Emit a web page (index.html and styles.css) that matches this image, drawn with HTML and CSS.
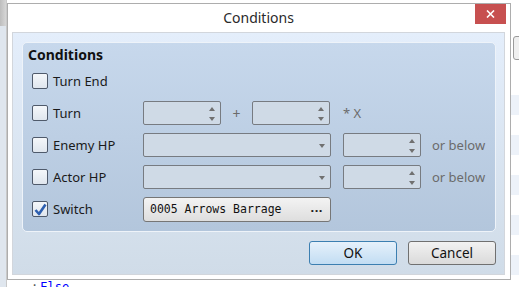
FILE: index.html
```html
<!DOCTYPE html>
<html lang="en">
<head>
    <meta charset="UTF-8">
    <title>Conditions</title>
    <link rel="stylesheet" href="styles.css">
</head>
<body>
    <div class="backdrop">
        <div class="scroll-strip"><div class="thumb"></div></div>
        <div class="event-list">
            <div class="list-rows">
                <div class="list-tool"></div>
            </div>
            <div class="list-line"><span class="dot">:</span><span class="kw">Else</span></div>
        </div>
    </div>

    <div class="dialog">
        <div class="titlebar">
            <span class="title">Conditions</span>
            <div class="close-btn">
                <svg width="9" height="8" viewBox="0 0 9 8"><path d="M1 0.5 L8 7.5 M8 0.5 L1 7.5" stroke="#fff" stroke-width="1.6" fill="none"/></svg>
            </div>
        </div>

        <div class="client">
            <div class="group">
                <div class="group-title">Conditions</div>

                <div class="row">
                    <div class="label-cell"><span class="check"></span>Turn End</div>
                </div>

                <div class="row">
                    <div class="label-cell"><span class="check"></span>Turn</div>
                    <div class="spin"><span class="arrows"></span></div>
                    <span class="plus">+</span>
                    <div class="spin"><span class="arrows"></span></div>
                    <span class="muted times">* X</span>
                </div>

                <div class="row">
                    <div class="label-cell"><span class="check"></span>Enemy HP</div>
                    <div class="combo"><span class="drop"></span></div>
                    <div class="spin"><span class="arrows"></span></div>
                    <span class="muted below">or below</span>
                </div>

                <div class="row">
                    <div class="label-cell"><span class="check"></span>Actor HP</div>
                    <div class="combo"><span class="drop"></span></div>
                    <div class="spin"><span class="arrows"></span></div>
                    <span class="muted below">or below</span>
                </div>

                <div class="row">
                    <div class="label-cell">
                        <span class="check checked">
                            <svg width="13" height="13" viewBox="0 0 13 13"><path d="M1.5 7 L5 11 L11.5 1.5" stroke="#2d5fb0" stroke-width="2.6" fill="none" stroke-linejoin="round"/></svg>
                        </span>Switch
                    </div>
                    <div class="picker"><span class="picker-value">0005 Arrows Barrage</span><span class="ellipsis">...</span></div>
                </div>
            </div>

            <div class="actions">
                <div class="btn btn-default">OK</div>
                <div class="btn">Cancel</div>
            </div>
        </div>
    </div>
</body>
</html>
```

FILE: styles.css
```css
* {
    box-sizing: border-box;
}
body {
    margin: 0;
    width: 519px;
    height: 287px;
    overflow: hidden;
    position: relative;
    background: #fff;
    font-family: "Noto Sans", sans-serif;
    font-size: 13px;
    color: #1a1a1a;
}

/* app behind the dialog */
.backdrop {
    display: flex;
    height: 100%;
}
.scroll-strip {
    width: 7px;
    background: #dfe6ee;
    border-right: 1px solid #c9c9c9;
}
.scroll-strip .thumb {
    height: 26px;
    background: linear-gradient(to right, #bdbdbd, #d6d6d6);
}
.event-list {
    flex: 1;
    display: flex;
    flex-direction: column;
}
.list-rows {
    flex: 1;
    position: relative;
    background-color: #fff;
    background-image: repeating-linear-gradient(to bottom, #edf2f9 0, #edf2f9 20px, #fff 20px, #fff 40px);
    background-position: 0 95px;
    background-repeat: no-repeat;
    background-size: 100% 200px;
}
.list-tool {
    position: absolute;
    right: -4px;
    top: 36px;
    width: 10px;
    height: 24px;
    border: 1px solid #9a9a9a;
    border-radius: 3px;
    background: #efefef;
}
.list-line {
    height: 7px;
    padding-left: 24px;
    font-family: "DejaVu Sans Mono", monospace;
    font-size: 12px;
    line-height: 14px;
}
.list-line .dot {
    color: #555;
    margin-right: 2px;
}
.list-line .kw {
    color: #0000ff;
}

/* dialog window */
.dialog {
    position: absolute;
    left: 7px;
    top: 3px;
    width: 504px;
    height: 277px;
    background: #fff;
    border: 1px solid #adadad;
    padding: 0 5px 4px 4px;
    display: flex;
    flex-direction: column;
}
.titlebar {
    height: 28px;
    line-height: 28px;
    text-align: center;
    font-size: 14px;
    color: #2a2a2a;
    position: relative;
}
.close-btn {
    position: absolute;
    right: -1px;
    top: 0;
    width: 31px;
    height: 20px;
    background: #c75050;
    display: flex;
    align-items: center;
    justify-content: center;
}
.client {
    flex: 1;
    border: 1px solid #d2d6dc;
    background: linear-gradient(to bottom, #e4eefb, #d0dce8);
    padding: 9px 8px 9px 9px;
    display: flex;
    flex-direction: column;
}

/* group box */
.group {
    height: 190px;
    border: 1px solid #eef3f9;
    border-radius: 5px;
    background: linear-gradient(to bottom, #c7d8ec, #b3c6dc);
    padding: 3px 9px 0 9px;
    display: flex;
    flex-direction: column;
    gap: 8px;
}
.group-title {
    font-weight: bold;
    font-size: 14px;
    line-height: 18px;
    margin-left: -4px;
    margin-bottom: -3px;
    color: #111;
}
.row {
    height: 24px;
    display: flex;
    align-items: center;
}
.label-cell {
    width: 111px;
    display: flex;
    align-items: center;
    gap: 5px;
}
.check {
    width: 16px;
    height: 16px;
    border: 1px solid #4f5a6b;
    border-radius: 2px;
    background: linear-gradient(to bottom, #f4f7fa, #dfe6ee);
    display: flex;
    align-items: center;
    justify-content: center;
}

.spin,
.combo {
    height: 24px;
    border: 1px solid #777b81;
    border-radius: 2px;
    background: #cfdae6;
    position: relative;
}
.spin {
    width: 78px;
}
.combo {
    width: 188px;
    margin-right: 12px;
}
.arrows::before,
.arrows::after,
.drop::before {
    content: "";
    position: absolute;
    right: 5px;
    border-left: 3.5px solid transparent;
    border-right: 3.5px solid transparent;
}
.arrows::before {
    top: 5px;
    border-bottom: 4px solid #707070;
}
.arrows::after {
    top: 15px;
    border-top: 4px solid #707070;
}
.drop::before {
    top: 10px;
    border-top: 4px solid #707070;
}
.plus {
    width: 31px;
    text-align: center;
    color: #6b6b6b;
    font-size: 14px;
}
.muted {
    color: #6b6b6b;
}
.times {
    margin-left: 13px;
}
.below {
    margin-left: 11px;
}

.picker {
    width: 188px;
    height: 25px;
    border: 1px solid #767676;
    border-radius: 3px;
    background: linear-gradient(to bottom, #f3f3f3, #dedede);
    display: flex;
    align-items: center;
    justify-content: space-between;
    padding: 0 7px 0 6px;
}
.picker-value {
    font-family: "DejaVu Sans Mono", monospace;
    font-size: 11.5px;
    color: #111;
}
.ellipsis {
    font-weight: bold;
    letter-spacing: 0.5px;
    margin-top: -4px;
}

/* dialog buttons */
.actions {
    margin-top: 9px;
    display: flex;
    justify-content: flex-end;
    gap: 11px;
}
.btn {
    width: 88px;
    height: 24px;
    line-height: 22px;
    text-align: center;
    font-size: 13.5px;
    border: 1px solid #707070;
    border-radius: 3px;
    background: linear-gradient(to bottom, #f2f2f2, #dadada);
    color: #111;
}
.btn-default {
    border-color: #3c7fb1;
    background: linear-gradient(to bottom, #e6f1fb, #c2ddf3);
}
```
